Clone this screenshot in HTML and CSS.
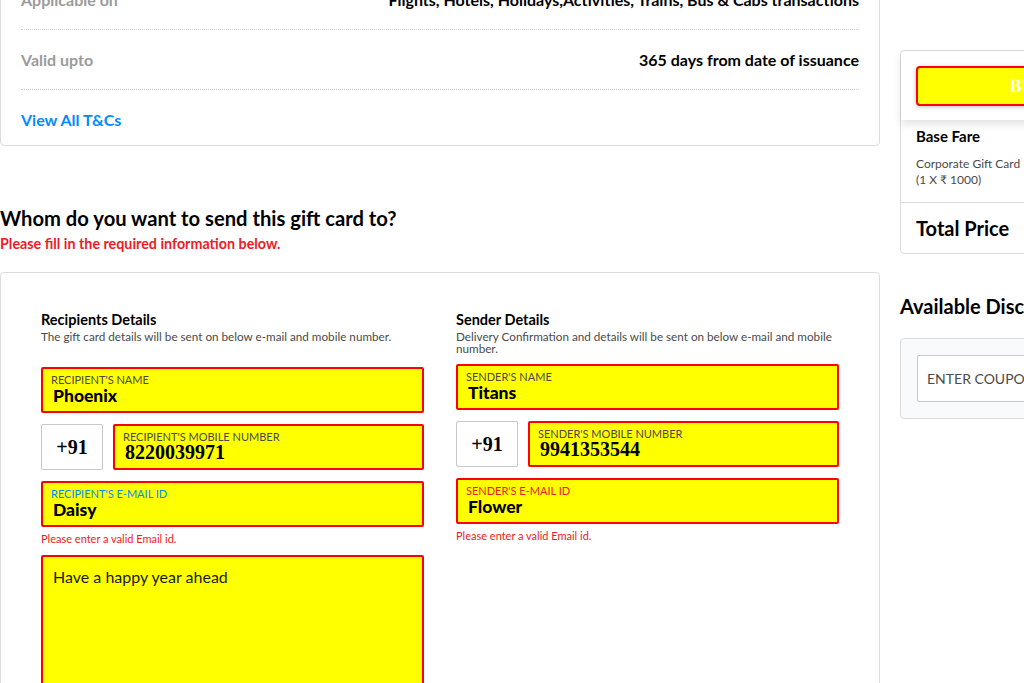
FILE: index.html
```html
<!DOCTYPE html>
<html lang="en">
<head>
<meta charset="utf-8">
<title>Gift Card</title>
<link rel="stylesheet" href="styles.css">
</head>
<body>
<div class="page">
  <main class="main">
    <section class="terms-card">
      <div class="terms-row">
        <span class="terms-label">Applicable on</span>
        <span class="terms-value">Flights, Hotels, Holidays,Activities, Trains, Bus &amp; Cabs transactions</span>
      </div>
      <div class="terms-row">
        <span class="terms-label">Valid upto</span>
        <span class="terms-value">365 days from date of issuance</span>
      </div>
      <div class="terms-link-row">
        <a class="terms-link" href="#">View All T&amp;Cs</a>
      </div>
    </section>

    <h2 class="section-title">Whom do you want to send this gift card to?</h2>
    <p class="section-warning">Please fill in the required information below.</p>

    <section class="form-card">
      <div class="form-col">
        <h3 class="col-title">Recipients Details</h3>
        <p class="col-desc col-desc--tall">The gift card details will be sent on below e-mail and mobile number.</p>
        <div class="field">
          <span class="field-label">RECIPIENT'S NAME</span>
          <span class="field-value">Phoenix</span>
        </div>
        <div class="phone-row">
          <div class="code-box">+91</div>
          <div class="field field--phone">
            <span class="field-label">RECIPIENT'S MOBILE NUMBER</span>
            <span class="field-value field-value--num">8220039971</span>
          </div>
        </div>
        <div class="field">
          <span class="field-label field-label--blue">RECIPIENT'S E-MAIL ID</span>
          <span class="field-value">Daisy</span>
        </div>
        <p class="field-error">Please enter a valid Email id.</p>
        <div class="message-box">Have a happy year ahead</div>
      </div>

      <div class="form-col">
        <h3 class="col-title">Sender Details</h3>
        <p class="col-desc">Delivery Confirmation and details will be sent on below e-mail and mobile number.</p>
        <div class="field">
          <span class="field-label">SENDER'S NAME</span>
          <span class="field-value">Titans</span>
        </div>
        <div class="phone-row">
          <div class="code-box">+91</div>
          <div class="field field--phone">
            <span class="field-label">SENDER'S MOBILE NUMBER</span>
            <span class="field-value field-value--num">9941353544</span>
          </div>
        </div>
        <div class="field">
          <span class="field-label field-label--red">SENDER'S E-MAIL ID</span>
          <span class="field-value">Flower</span>
        </div>
        <p class="field-error">Please enter a valid Email id.</p>
      </div>
    </section>
  </main>

  <aside class="sidebar">
    <section class="price-card">
      <div class="buy-area">
        <button class="buy-btn" type="button">BUY NOW</button>
      </div>
      <div class="fare-block">
        <div class="fare-title">Base Fare</div>
        <div class="fare-desc">Corporate Gift Card<br>(1 X ₹ 1000)</div>
      </div>
      <div class="total-block">
        <span class="total-title">Total Price</span>
      </div>
    </section>

    <h2 class="disc-title">Available Discounts</h2>
    <section class="coupon-card">
      <div class="coupon-input">ENTER COUPON CODE</div>
    </section>
  </aside>
</div>
</body>
</html>
```

FILE: styles.css
```css
html, body {
  margin: 0;
  padding: 0;
  overflow: hidden;
  background: #fff;
}

body {
  font-family: Lato, "Open Sans", sans-serif;
  color: #000;
}

.page {
  display: flex;
  align-items: flex-start;
  gap: 20px;
  width: 1200px;
}

.main {
  width: 880px;
  flex: none;
}

/* terms card */
.terms-card {
  margin-top: -31px;
  border: 1px solid #dcdcdc;
  border-radius: 4px;
  padding: 0 20px;
}

.terms-row {
  height: 59px;
  display: flex;
  justify-content: space-between;
  align-items: center;
  border-bottom: 1px dotted #cfcfcf;
  font-size: 16px;
  font-weight: 700;
}

.terms-label {
  color: #9b9b9b;
}

.terms-value {
  color: #000;
}

.terms-link-row {
  height: 55px;
  padding-top: 20px;
  box-sizing: border-box;
}

.terms-link {
  font-size: 16px;
  font-weight: 700;
  line-height: 20px;
  color: #008cff;
  text-decoration: none;
}

/* heading */
.section-title {
  margin: 58px 0 0;
  font-size: 20.2px;
  line-height: 28px;
  font-weight: 700;
  color: #000;
}

.section-warning {
  margin: 3px 0 0;
  font-size: 14.3px;
  line-height: 18px;
  font-weight: 700;
  color: #ec1c24;
}

/* form card */
.form-card {
  margin-top: 19px;
  border: 1px solid #dcdcdc;
  border-radius: 4px;
  padding: 38px 40px 40px;
  display: flex;
  gap: 32px;
  height: 420px;
  box-sizing: border-box;
}

.form-col {
  width: 383px;
  flex: none;
}

.col-title {
  margin: 0;
  font-size: 14.5px;
  line-height: 18px;
  font-weight: 700;
  color: #000;
}

.col-desc {
  margin: 1px 0 10px;
  font-size: 11.7px;
  line-height: 12px;
  color: #4a4a4a;
  min-height: 24px;
}

.col-desc--tall {
  min-height: 27px;
}

.field {
  height: 46px;
  box-sizing: border-box;
  border: 2px solid #ff0000;
  border-radius: 2px;
  background: #ffff00;
  padding: 4px 8px 0;
  display: flex;
  flex-direction: column;
  margin-bottom: 11px;
}

.field-label {
  font-size: 11px;
  line-height: 13px;
  color: #4a4a4a;
}

.field-label--blue {
  color: #008cff;
}

.field-label--red {
  color: #ec1c24;
}

.field-value {
  padding-left: 2px;
  font-size: 17.5px;
  line-height: 19px;
  font-weight: 900;
  color: #000;
}

.field-value--num {
  font-family: "Liberation Serif", "Times New Roman", serif;
  font-weight: 700;
  font-size: 20px;
}

.phone-row {
  display: flex;
  gap: 10px;
  margin-bottom: 11px;
}

.code-box {
  width: 62px;
  height: 46px;
  box-sizing: border-box;
  flex: none;
  border: 1px solid #c8c8c8;
  border-radius: 2px;
  display: flex;
  align-items: center;
  justify-content: center;
  font-family: "Liberation Serif", "Times New Roman", serif;
  font-weight: 700;
  font-size: 20px;
}

.field--phone {
  flex: 1;
  margin-bottom: 0;
}

.field-error {
  margin: -6px 0 0;
  font-size: 11px;
  line-height: 14px;
  color: #ec1c24;
}

.message-box {
  margin-top: 9px;
  height: 160px;
  box-sizing: border-box;
  border: 2px solid #ff0000;
  border-radius: 2px;
  background: #ffff00;
  padding: 10px 10px;
  font-size: 16px;
  line-height: 20px;
  color: #1a1a1a;
}

/* sidebar */
.sidebar {
  width: 300px;
  flex: none;
  padding-top: 50px;
}

.price-card {
  border: 1px solid #dcdcdc;
  border-radius: 4px;
}

.buy-area {
  padding: 15px 15px 14px;
  box-shadow: 0 4px 8px rgba(0, 0, 0, 0.12);
  border-radius: 4px 4px 0 0;
}

.buy-btn {
  display: block;
  width: 100%;
  height: 40px;
  border: 2px solid #ff0000;
  border-radius: 4px;
  background: #ffff00;
  color: #fff;
  font-family: "Liberation Serif", "Times New Roman", serif;
  font-weight: 700;
  font-size: 18px;
  padding-left: 12px;
  box-shadow: 0 1px 4px rgba(0, 0, 0, 0.25);
}

.fare-block {
  padding: 6px 15px 14px;
  border-bottom: 1px solid #dcdcdc;
}

.fare-title {
  font-size: 15px;
  line-height: 20px;
  font-weight: 700;
}

.fare-desc {
  margin-top: 10px;
  font-size: 12px;
  line-height: 16px;
  color: #4a4a4a;
}

.total-block {
  padding: 12px 15px 12px;
}

.total-title {
  font-size: 20px;
  line-height: 26px;
  font-weight: 700;
}

.disc-title {
  margin: 39px 0 0;
  font-size: 20px;
  line-height: 26px;
  font-weight: 700;
}

.coupon-card {
  margin-top: 19px;
  border: 1px solid #dcdcdc;
  border-radius: 4px;
  background: #f9fafb;
  padding: 16px;
}

.coupon-input {
  height: 47px;
  box-sizing: border-box;
  border: 1px solid #c8c8c8;
  border-radius: 2px;
  background: #fff;
  padding: 0 9px;
  display: flex;
  align-items: center;
  font-size: 14px;
  color: #4a4a4a;
}
```
